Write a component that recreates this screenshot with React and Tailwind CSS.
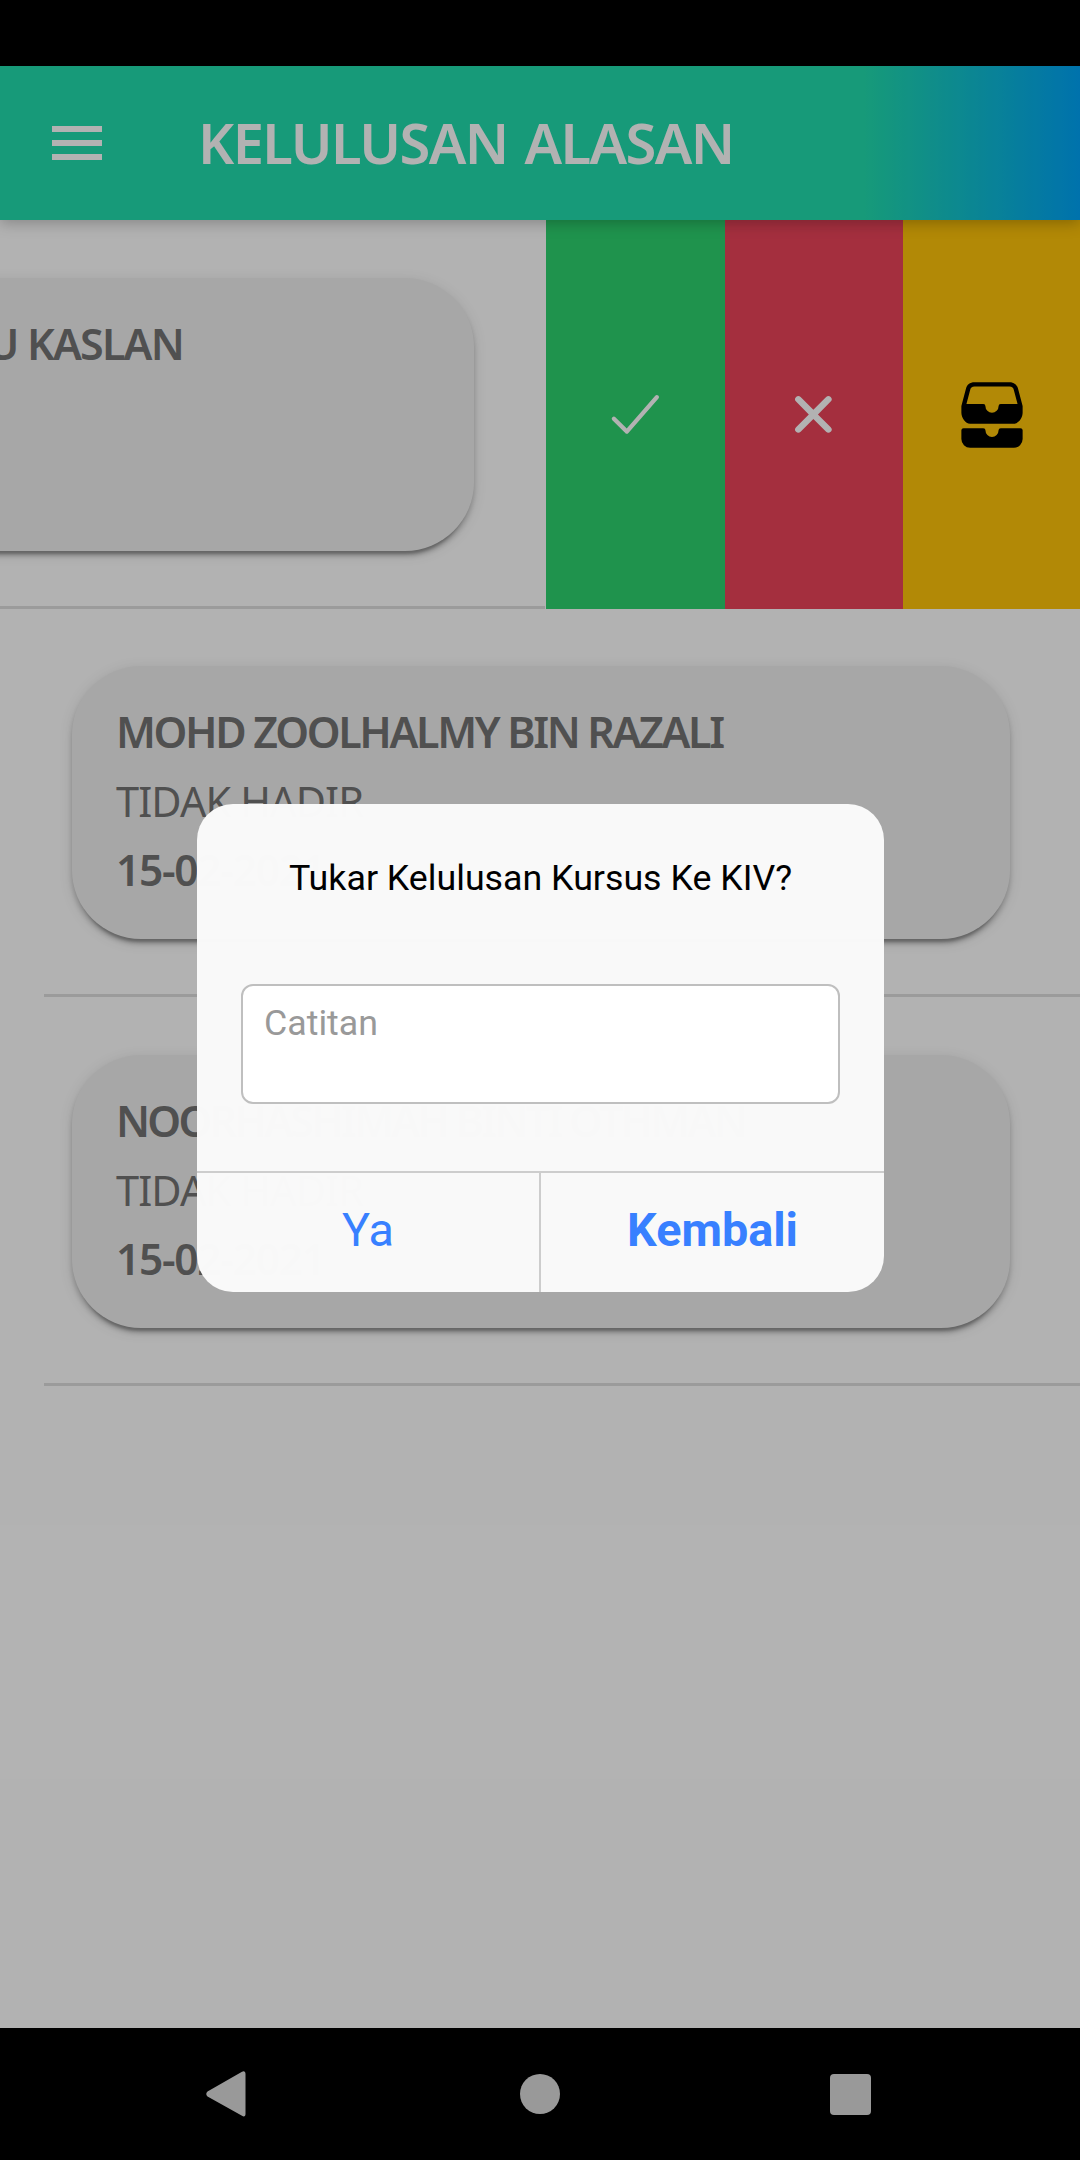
import { IoCheckmarkOutline, IoClose, IoFileTrayStacked } from "react-icons/io5";

const CARD_SHADOW =
  "shadow-[0_8px_3px_-5.5px_rgba(0,0,0,0.25),0_5px_5.5px_0_rgba(0,0,0,0.18),0_3px_14px_0_rgba(0,0,0,0.12)]";

function Card({ name, status, date }) {
  return (
    <div
      className={`flex h-[273px] w-[938px] shrink-0 flex-col rounded-[69px] bg-[#f0f0f0] pl-[44px] pt-[36px] text-[#737373] ${CARD_SHADOW}`}
    >
      {name}
      {status}
      {date}
    </div>
  );
}

function Entry({ name, nameClass, className, offset }) {
  return (
    <div className={`flex flex-col ${className}`}>
      <div className={`ml-[72px] ${offset}`}>
        <Card
          name={<h2 className={`h-[70px] text-[43px] leading-[59px] font-semibold whitespace-nowrap ${nameClass}`}>{name}</h2>}
          status={<p className="h-[68px] text-[41.5px] leading-[59px] font-normal tracking-[-0.9px] whitespace-nowrap">TIDAK HADIR</p>}
          date={<p className="text-[42.5px] leading-[59px] font-semibold tracking-[-1.3px] whitespace-nowrap">15-02-2021</p>}
        />
      </div>
      <div className="mt-auto ml-[44px] h-[3px] bg-[#dedede]" />
    </div>
  );
}

function Header() {
  return (
    <header className="relative z-10 flex h-[154px] shrink-0 items-center bg-[linear-gradient(90deg,#21ddae_80%,#00a4f7_100%)] pl-[52px] shadow-[0_3px_14px_0_rgba(0,0,0,0.25)]">
      <div className="flex w-[50px] flex-col gap-[8px]">
        <span className="h-[6px] bg-white" />
        <span className="h-[6px] bg-white" />
        <span className="h-[6px] bg-white" />
      </div>
      <h1 className="mb-[3px] ml-[96px] text-[56px] leading-[76px] font-semibold tracking-[-1.6px] whitespace-nowrap text-white [word-spacing:4px]">
        KELULUSAN ALASAN
      </h1>
    </header>
  );
}

function SwipedRow() {
  return (
    <div className="flex h-[389px] shrink-0">
      <div className="flex w-[545px] flex-col">
        <div className="mt-[58px] flex justify-end overflow-x-clip pr-[71px]">
          <Card
            name={
              <h2 className="mr-[291px] h-[69px] text-right text-[43px] leading-[59px] font-semibold tracking-[-1.8px] whitespace-nowrap">
                U KASLAN
              </h2>
            }
          />
        </div>
        <div className="mt-auto h-[3px] bg-[#dedede]" />
      </div>
      <div className="ml-px flex flex-1 text-[68.75px] text-white">
        <div className="flex w-[179px] items-center justify-center bg-[#2dd36f]">
          <IoCheckmarkOutline />
        </div>
        <div className="flex w-[178px] items-center justify-center bg-[#eb445a] pr-px">
          <IoClose />
        </div>
        <div className="flex flex-1 items-center justify-center bg-[#ffc409] text-[70px] text-black">
          <IoFileTrayStacked />
        </div>
      </div>
    </div>
  );
}

function Dialog() {
  return (
    <div className="flex h-[488px] w-[687px] flex-col overflow-hidden rounded-[36px] bg-[#fafafa]/99 font-['Roboto',sans-serif]">
      <p className="mt-[53px] text-center text-[35.75px] leading-[42px] text-black">
        Tukar Kelulusan Kursus Ke KIV?
      </p>
      <div className="mx-[44px] mt-[85px] h-[120px] rounded-[12px] border-2 border-[#bfbfbf] bg-white pt-[16px] pl-[21px] text-[35.75px] leading-[42px] text-[#999999]">
        Catitan
      </div>
      <div className="mt-auto flex h-[121px] border-t-2 border-[#cdcdcd] text-[46.75px] leading-[114px] text-[#3880ff]">
        <div className="w-[344px] border-r-2 border-[#cdcdcd] text-center">Ya</div>
        <div className="flex-1 text-center font-bold">Kembali</div>
      </div>
    </div>
  );
}

export default function App() {
  return (
    <div className="relative flex h-[2160px] w-[1080px] flex-col overflow-hidden bg-white font-['Noto_Sans',sans-serif]">
      <div className="h-[66px] shrink-0 bg-black" />
      <Header />
      <main className="flex flex-1 flex-col">
        <SwipedRow />
        <Entry className="h-[388px]" offset="mt-[57px]" name="MOHD ZOOLHALMY BIN RAZALI" nameClass="tracking-[-2.35px]" />
        <Entry className="h-[389px]" offset="mt-[58px]" name="NOORHASHIMAH BINTI OTHMAN" nameClass="tracking-[-2.75px]" />
      </main>
      <nav className="flex h-[132px] shrink-0 items-center bg-black pl-[206px]">
        <svg width="40" height="46" viewBox="0 0 40 46" fill="#999">
          <path d="M36 .8C38 -.4 39.5 .6 39.5 3V43C39.5 45.4 38 46.2 36 44.8L1.5 25.4Q-1 23 1.5 20.6Z" />
        </svg>
        <div className="ml-[274px] size-[40px] rounded-full bg-[#999]" />
        <div className="ml-[270px] size-[41px] rounded-[4px] bg-[#999]" />
      </nav>
      <div className="absolute inset-x-0 top-[66px] bottom-[132px] z-20 flex items-center justify-center bg-black/30 pt-[2px] pl-px">
        <Dialog />
      </div>
    </div>
  );
}
